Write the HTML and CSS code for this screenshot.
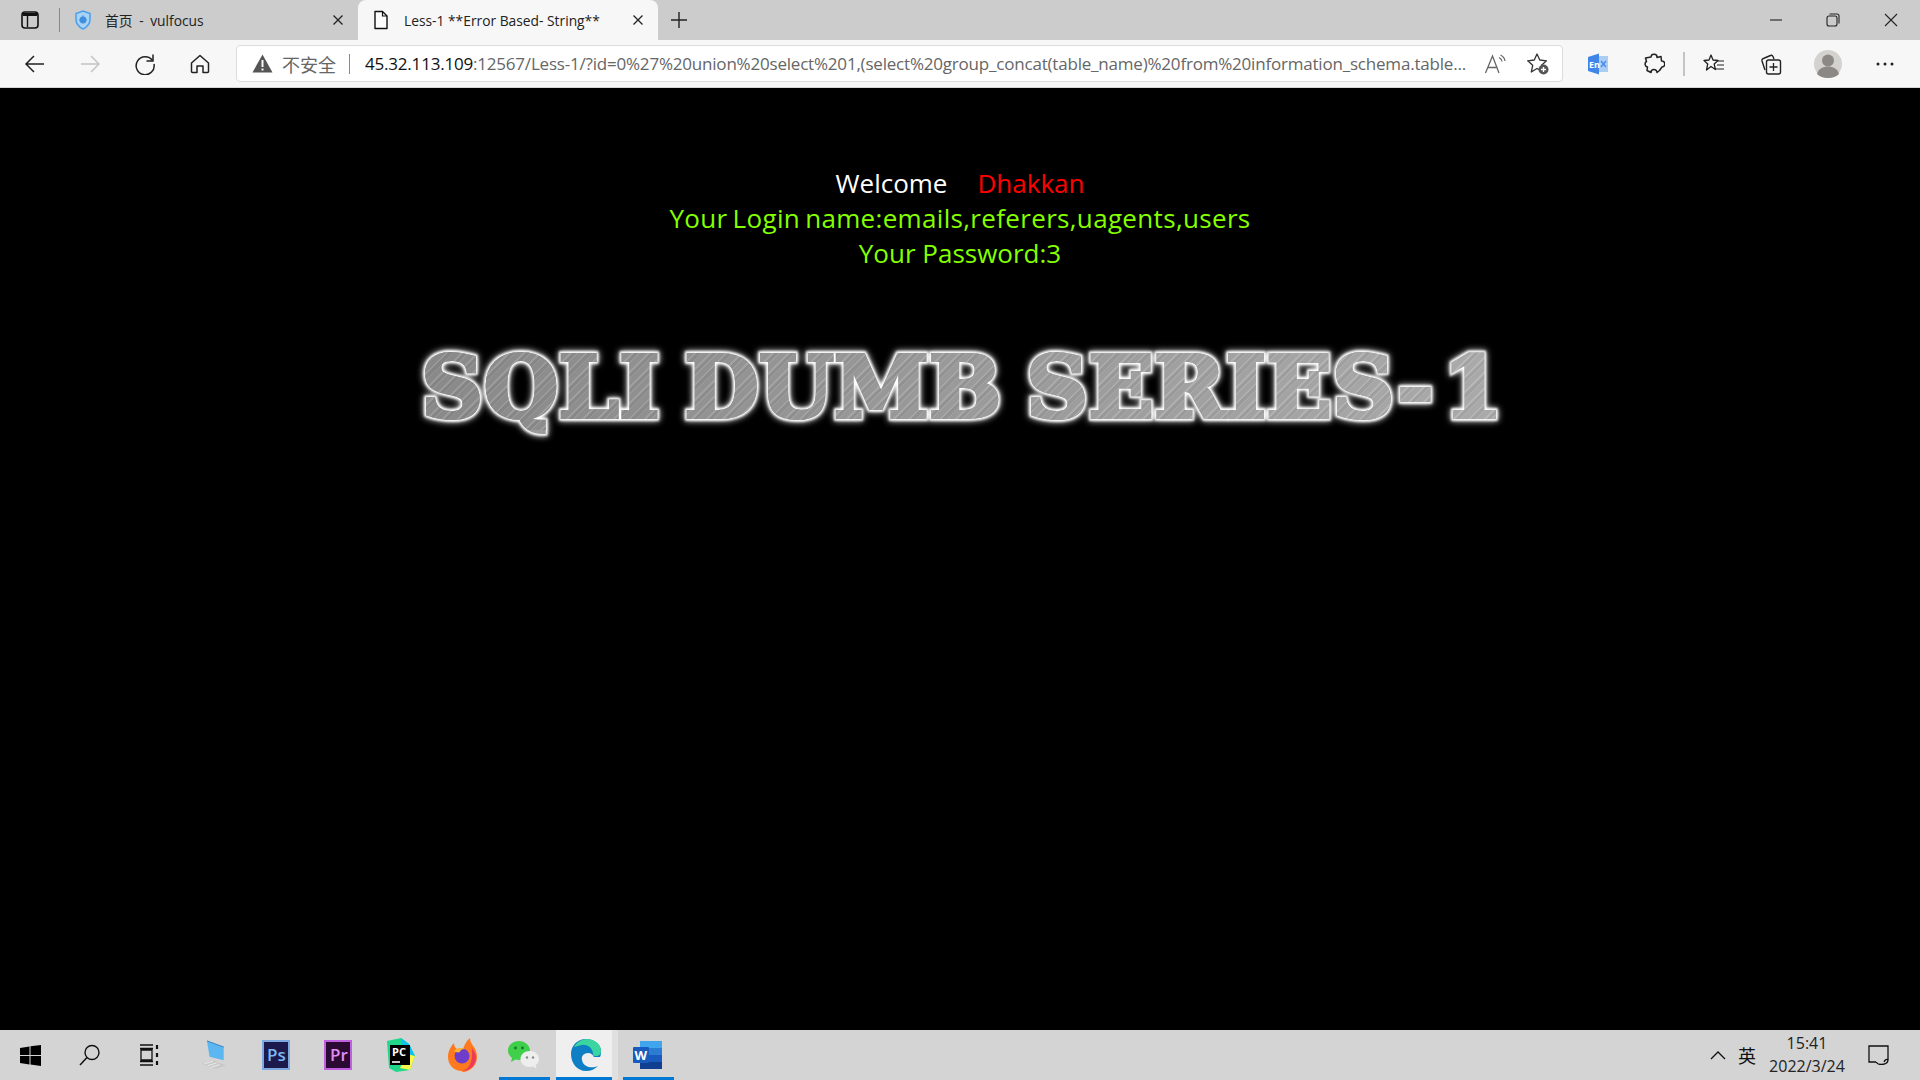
FILE: index.html
```html
<!DOCTYPE html>
<html lang="en">
<head>
  <meta charset="UTF-8" />
  <title>Less-1 **Error Based- String**</title>
  <link rel="stylesheet" href="styles.css">
</head>
<body>

  <header class="tabstrip">
    <div class="tab-actions">
      <svg width="20" height="20" viewBox="0 0 20 20"><rect x="2" y="2" width="16" height="16" rx="3" fill="none" stroke="#111" stroke-width="1.6"/><path d="M3 3h14v3H3z" fill="#111"/><path d="M7.5 6v11" stroke="#111" stroke-width="1.4"/></svg>
    </div>
    <div class="tab first">
      <svg class="tab-icon" width="18" height="20" viewBox="0 0 18 20"><path d="M9 1l7 2.500v6c0 4.500-3 7.500-7 9.500-4-2-7-5-7-9.500v-6z" fill="#a9d2f7" stroke="#4aa0ec" stroke-width="1.500"/><circle cx="9" cy="10" r="3.400" fill="#3f8fdc"/><path d="M9 5.500v2M5 10h8" stroke="#3f8fdc" stroke-width="1.200"/></svg>
      <span class="tab-title">首页 - vulfocus</span>
      <svg class="tab-close" width="12" height="12" viewBox="0 0 12 12"><path d="M1.500 1.500l9 9M10.500 1.500l-9 9" stroke="#222" stroke-width="1.300"/></svg>
    </div>
    <div class="tab active">
      <svg class="tab-icon" width="18" height="20" viewBox="0 0 18 20"><path d="M3 1.500h7.500L15 6v12.500H3z" fill="#fff" stroke="#111" stroke-width="1.400" stroke-linejoin="round"/><path d="M10.500 1.500V6H15" fill="none" stroke="#111" stroke-width="1.200"/></svg>
      <span class="tab-title">Less-1 **Error Based- String**</span>
      <svg class="tab-close" width="12" height="12" viewBox="0 0 12 12"><path d="M1.500 1.500l9 9M10.500 1.500l-9 9" stroke="#222" stroke-width="1.300"/></svg>
    </div>
    <div class="tab-new">
      <svg width="18" height="18" viewBox="0 0 18 18"><path d="M9 1v16M1 9h16" stroke="#222" stroke-width="1.400"/></svg>
    </div>
    <div class="window-controls">
      <span class="win-btn min"><svg width="14" height="14" viewBox="0 0 14 14"><path d="M1 7h12" stroke="#222" stroke-width="1.100"/></svg></span>
      <span class="win-btn"><svg width="14" height="14" viewBox="0 0 14 14"><rect x="1" y="3" width="10" height="10" rx="2" fill="none" stroke="#222" stroke-width="1.100"/><path d="M3.500 1H11a2 2 0 0 1 2 2v7.500" fill="none" stroke="#222" stroke-width="1.100"/></svg></span>
      <span class="win-btn"><svg width="14" height="14" viewBox="0 0 14 14"><path d="M1 1l12 12M13 1L1 13" stroke="#222" stroke-width="1.100"/></svg></span>
    </div>
  </header>

  <nav class="toolbar">
    <span class="nav-btn"><svg width="22" height="22" viewBox="0 0 22 22"><path d="M20 11H2M10 3l-8 8 8 8" fill="none" stroke="#222" stroke-width="1.500"/></svg></span>
    <span class="nav-btn"><svg width="22" height="22" viewBox="0 0 22 22"><path d="M2 11h18M12 3l8 8-8 8" fill="none" stroke="#c4c4c4" stroke-width="1.500"/></svg></span>
    <span class="nav-btn"><svg width="22" height="22" viewBox="0 0 22 22"><path d="M18.500 7.500A9 9 0 1 0 20 11" fill="none" stroke="#222" stroke-width="1.500"/><path d="M19 1.500v6.500h-6.500" fill="none" stroke="#222" stroke-width="1.500"/></svg></span>
    <span class="nav-btn"><svg width="22" height="22" viewBox="0 0 22 22"><path d="M2.500 10L11 2.500 19.500 10v8.500a1 1 0 0 1-1 1H14V13H8v6.500H3.500a1 1 0 0 1-1-1z" fill="none" stroke="#222" stroke-width="1.500" stroke-linejoin="round"/></svg></span>

    <div class="address">
      <svg class="warn" width="21" height="19" viewBox="0 0 21 19"><path d="M10.500 .5L20.500 18.500H.5z" fill="#555"/><path d="M10.500 6v7M10.500 14.500v2" stroke="#f7f7f7" stroke-width="2"/></svg>
      <span class="insecure">不安全</span>
      <span class="addr-sep"></span>
      <span class="url"><b>45.32.113.109</b>:12567/Less-1/?id=0%27%20union%20select%201,(select%20group_concat(table_name)%20from%20information_schema.table...</span>
      <svg class="addr-icon" width="24" height="22" viewBox="0 0 24 22"><path d="M1.500 20L8.500 3l6.500 17M4 14.500h9" fill="none" stroke="#666" stroke-width="1.300"/><path d="M15 4.500a5 5 0 0 1 3 4M16.500 2a8 8 0 0 1 4.500 6" fill="none" stroke="#666" stroke-width="1.200"/></svg>
      <svg class="addr-icon" width="24" height="24" viewBox="0 0 24 24"><path d="M11 2l2.800 6 6.700.8-5 4.500 1.300 6.500L11 16.500 5.300 20l1.400-6.700-5-4.500 6.600-.8z" fill="none" stroke="#333" stroke-width="1.300" stroke-linejoin="round"/><circle cx="17.500" cy="17.500" r="5" fill="#555"/><path d="M17.500 15v5M15 17.500h5" stroke="#fff" stroke-width="1.300"/></svg>
    </div>

    <span class="tool"><svg width="22" height="22" viewBox="0 0 22 22"><path d="M1 4l11-3.500V21.500L1 18z" fill="#3f86e8"/><path d="M12 3h9v16h-9z" fill="#a9cdf5"/><text x="2" y="15" class="en-mark">En</text><path d="M14 8l5 6M19 8l-5 6" stroke="#3f86e8" stroke-width="1.200"/></svg></span>
    <span class="tool"><svg width="22" height="22" viewBox="0 0 22 22"><path d="M8 4a3 3 0 0 1 6 .5l4-1 .5 4.500a3 3 0 0 1 .5 6l-2.500 3.500-2.500 2a3 3 0 0 0-6 0l-4-2 .5-3.500a3 3 0 0 1-1-5.500L2.500 5z" fill="none" stroke="#222" stroke-width="1.500" stroke-linejoin="round"/></svg></span>
    <span class="tool-sep"></span>
    <span class="tool wide"><svg width="22" height="22" viewBox="0 0 22 22"><path d="M8 2l2 5 5 .5-3.800 3.500 1.200 5.500L8 13.500 3.500 17 4.700 11 1 7.500 6 7z" fill="none" stroke="#222" stroke-width="1.300" stroke-linejoin="round"/><path d="M14 8h7M14 12h7M13 16h8" stroke="#222" stroke-width="1.200"/></svg></span>
    <span class="tool wide"><svg width="22" height="22" viewBox="0 0 22 22"><path d="M5 17L2 8a2 2 0 0 1 1.400-2.500L10.500 2.500A2 2 0 0 1 13 3.500L14 6" fill="none" stroke="#222" stroke-width="1.400"/><rect x="6.500" y="7" width="14" height="14" rx="2" fill="#f7f7f7" stroke="#222" stroke-width="1.400"/><path d="M13.500 10v8M9.500 14h8" stroke="#222" stroke-width="1.300"/></svg></span>
    <span class="tool wide"><span class="avatar"><svg width="28" height="28" viewBox="0 0 28 28"><circle cx="14" cy="14" r="14" fill="#d4d2cf"/><circle cx="14" cy="10.500" r="6" fill="#8c8886"/><path d="M3 24c1.500-5.500 6-7.500 11-7.500S23.500 18.500 25 24c-2.500 2.600-6.500 4-11 4s-8.500-1.400-11-4z" fill="#8c8886"/></svg></span></span>
    <span class="tool wide"><svg width="22" height="6" viewBox="0 0 22 6"><circle cx="4" cy="3" r="1.500" fill="#222"/><circle cx="11" cy="3" r="1.500" fill="#222"/><circle cx="18" cy="3" r="1.500" fill="#222"/></svg></span>
  </nav>

  <main class="page">
    <div class="result">
      <div class="welcome">Welcome&nbsp;&nbsp;&nbsp;&nbsp;<span class="name">Dhakkan</span></div>
      <div class="green login">Your Login name:emails,referers,uagents,users</div>
      <div class="green">Your Password:3</div>
    </div>
    <div class="banner"><span class="banner-text" data-text="SQLI DUMB SERIES-&#8202;1">SQLI DUMB SERIES-&#8202;1</span></div>
  </main>

  <footer class="taskbar">
    <span class="sys-btn"><svg width="21" height="21" viewBox="0 0 21 21"><path d="M0 3l9.500-1.500V10H0zM10.500 1.300L21 0v10H10.500zM0 11h9.500v8.500L0 18zM10.500 11H21v10l-10.500-1.500z" fill="#000"/></svg></span>
    <span class="sys-btn"><svg width="22" height="22" viewBox="0 0 22 22"><circle cx="13" cy="8.500" r="7" fill="none" stroke="#111" stroke-width="1.400"/><path d="M8 13.500L1 21" stroke="#111" stroke-width="1.500"/></svg></span>
    <span class="sys-btn"><svg width="22" height="22" viewBox="0 0 22 22"><path d="M1 1h13M1 21h13M1 4.500h13M1 17.500h13M2 6v10h11V6z" fill="none" stroke="#111" stroke-width="1.300"/><path d="M18 1v4M18 9v4M18 17v4" stroke="#111" stroke-width="2.200"/></svg></span>

    <div class="apps">
      <span class="app"><svg width="30" height="30" viewBox="0 0 30 34"><path d="M7 1l19 7v15L10 19z" fill="#5cb6ef"/><path d="M7 1l19 7" stroke="#2a7bbf"/><path d="M1 27l13-4 15 6-12 4z" fill="#c9c9c9"/><path d="M4 27l10-3M8 29l10-3M11 31l10-3" stroke="#eee"/></svg></span>
      <span class="app"><svg width="28" height="30" viewBox="0 0 28 30"><rect x="1" y="1" width="26" height="28" fill="#1c1a4d" stroke="#7da9e0" stroke-width="2"/><text x="5" y="21" class="app-mark ps">Ps</text></svg></span>
      <span class="app"><svg width="28" height="30" viewBox="0 0 28 30"><rect x="1" y="1" width="26" height="28" fill="#2a0a33" stroke="#c05fe0" stroke-width="2"/><text x="6" y="21" class="app-mark pr">Pr</text></svg></span>
      <span class="app"><svg width="32" height="34" viewBox="0 0 32 34"><path d="M3 3l14-3 8 6 6 12-5 14-14 2-7-4z" fill="#21d789"/><path d="M17 0l8 6 6 12-9 4z" fill="#07c3f2"/><path d="M16 30l10 2 5-14-8-2z" fill="#fcf84a"/><rect x="6" y="7" width="20" height="20" fill="#000"/><text x="8" y="18" class="app-mark pc">PC</text><path d="M8 24h8" stroke="#fff" stroke-width="1.600"/></svg></span>
      <span class="app"><svg width="30" height="34" viewBox="0 0 30 34"><path d="M15 33C6 33 1 26 1 19 1 13 4 8 7 5c0 3 1 5 3 6 2-1 5-1 6 0 1-3 3-8 7-11 0 4 2 6 4 9 2 3 3 6 3 10 0 8-6 15-15 15z" fill="#ff7a1f"/><path d="M25 10c3 4 4 7 4 10 0 7-6 13-14 13 7-2 11-8 10-23z" fill="#ee3a5a"/><circle cx="15" cy="18" r="7.500" fill="#6e3dc9"/><path d="M7 13c3-3 8-4 11-2-3 0-5 1-5 3-3 1-4 0-6-1z" fill="#ffb52e"/></svg></span>
      <span class="app open"><svg width="32" height="30" viewBox="0 0 32 30"><path d="M11 1C5 1 0 5 0 10.500c0 3 1.500 5.500 4 7.500l-1 4 4.500-2.500c1 .3 2.300.5 3.500.5 6 0 11-4.500 11-9.500S17 1 11 1z" fill="#3fcf4a"/><circle cx="7.500" cy="8" r="1.400" fill="#137a25"/><circle cx="14.500" cy="8" r="1.400" fill="#137a25"/><path d="M22 11c-5.500 0-9.500 3.500-9.500 8s4 8 9.500 8c1 0 2-.2 3-.5l3.500 2-.8-3.500c2-1.500 3.300-3.500 3.300-6 0-4.500-4-8-9-8z" fill="#eeeeee"/><circle cx="19" cy="17.500" r="1.200" fill="#888"/><circle cx="25" cy="17.500" r="1.200" fill="#888"/></svg></span>
      <span class="app open active"><svg width="30" height="32" viewBox="0 0 30 32"><path d="M15 0C6 0 0 7 0 15c0 9 6 17 15 17 5 0 9-2 12-5-6 3-15 1-16-6-1-4 2-7 6-7 3 0 5 2 6 4h6c1-2 1-4 1-6C30 5 23 0 15 0z" fill="#0e7fc4"/><path d="M3 8c3-5 8-8 13-8 8 0 14 6 14 12 0 3-2 5-5 5s-3-1-3-2c0-6-6-10-11-9-4 .5-7 2-8 2z" fill="#3bd6a0"/></svg></span>
      <span class="app open"><svg width="30" height="30" viewBox="0 0 30 30"><rect x="7" y="1" width="22" height="28" rx="1" fill="#2b7cd3"/><rect x="7" y="1" width="22" height="7" fill="#41a5ee"/><rect x="7" y="15" width="22" height="7" fill="#185abd"/><rect x="7" y="22" width="22" height="7" fill="#103f91"/><rect x="0" y="7" width="16" height="16" rx="1" fill="#185abd"/><text x="1.500" y="20" class="app-mark word">W</text></svg></span>
    </div>

    <div class="tray">
      <svg class="tray-chevron" width="16" height="10" viewBox="0 0 16 10"><path d="M1 9l7-7 7 7" fill="none" stroke="#111" stroke-width="1.300"/></svg>
      <span class="ime">英</span>
      <div class="clock"><span>15:41</span><span>2022/3/24</span></div>
      <svg class="notify" width="22" height="20" viewBox="0 0 22 20"><path d="M8 17H1V1h19v13.500" fill="none" stroke="#111" stroke-width="1.300"/><path d="M8 17c1 1.500 3 2.500 5 2.500 4.500 0 7-2 7-5-1-.5-3 0-4 2.500" fill="none" stroke="#111" stroke-width="1.300"/></svg>
    </div>
  </footer>

</body>
</html>
```

FILE: styles.css
```css
* {
  box-sizing: border-box;
}

html, body {
  height: 100%;
}

body {
  margin: 0;
  height: 1080px;
  overflow: hidden;
  display: flex;
  flex-direction: column;
  background: #000;
  font-family: "Open Sans", "Noto Sans CJK SC", sans-serif;
}

/* tab strip */
.tabstrip {
  height: 40px;
  flex: none;
  display: flex;
  background: #cccccc;
  color: #222;
  font-size: 13.8px;
}

.tab-actions {
  width: 60px;
  display: flex;
  align-items: center;
  padding-left: 20px;
  position: relative;
}

.tab-actions::after {
  content: "";
  position: absolute;
  right: 0;
  top: 8px;
  height: 24px;
  width: 1px;
  background: #8a8a8a;
}

.tab {
  width: 298px;
  display: flex;
  align-items: center;
  padding: 0 14px;
}

.tab.first .tab-title {
  word-spacing: 3px;
}

.tab.active {
  width: 300px;
  background: #f7f7f7;
  border-radius: 8px 8px 0 0;
  padding-left: 14px;
}

.tab-icon {
  flex: none;
  margin-right: 13px;
}

.tab.active .tab-icon {
  margin-right: 14px;
}

.tab-title {
  flex: 1;
  white-space: nowrap;
}

.tab-close {
  flex: none;
}

.tab-new {
  width: 42px;
  display: flex;
  align-items: center;
  justify-content: center;
}

.window-controls {
  margin-left: auto;
  display: flex;
}

.win-btn {
  width: 58px;
  display: flex;
  align-items: center;
  justify-content: center;
}

.win-btn.min {
  width: 56px;
}

/* address bar row */
.toolbar {
  height: 48px;
  flex: none;
  display: flex;
  align-items: center;
  background: #f7f7f7;
  padding: 0 7px;
  border-bottom: 1px solid #d6d6d6;
}

.nav-btn {
  width: 55px;
  flex: none;
  display: flex;
  align-items: center;
  justify-content: center;
}

.address {
  flex: 1;
  min-width: 0;
  height: 37px;
  margin: 0 7px 0 9px;
  display: flex;
  align-items: center;
  background: #fff;
  border: 1px solid #dcdcdc;
  border-radius: 4px;
  padding: 0 12px 0 15px;
  font-size: 17px;
  color: #666;
}

.warn {
  flex: none;
}

.insecure {
  margin-left: 9px;
  color: #666;
  font-size: 18px;
}

.addr-sep {
  width: 1px;
  height: 20px;
  margin: 0 15px 0 13px;
  background: #888;
}

.url {
  flex: 1;
  min-width: 0;
  white-space: nowrap;
  overflow: hidden;
  letter-spacing: -.2px;
}

.url b {
  font-weight: 400;
  color: #111;
}

.addr-icon {
  flex: none;
  margin-left: 18px;
}

.tool {
  width: 56px;
  flex: none;
  display: flex;
  align-items: center;
  justify-content: center;
}

.tool.wide {
  width: 57px;
}

.tool-sep {
  width: 2px;
  height: 24px;
  margin-left: 1px;
  background: #c4c4c4;
}

.avatar {
  display: flex;
}

.en-mark {
  font: 700 9px "Open Sans", sans-serif;
  fill: #fff;
}

/* page content */
.page {
  flex: 1;
  min-height: 0;
  background: #000;
  padding-top: 78px;
  text-align: center;
  font-size: 26px;
  line-height: 35px;
}

.welcome {
  color: #fff;
}

.name {
  color: #ff0000;
  margin-left: 3px;
}

.green {
  color: #84ff00;
}

.login {
  letter-spacing: .33px;
  word-spacing: -2px;
}

.banner {
  margin-top: 74px;
  padding-left: 5px;
  line-height: 1;
}

.banner-text {
  display: inline-block;
  position: relative;
  z-index: 0;
  font-family: "DejaVu Serif", serif;
  font-weight: 700;
  font-size: 85px;
  letter-spacing: .9px;
  word-spacing: -6px;
  white-space: nowrap;
  color: #9b9b9b;
  -webkit-text-stroke: 4px #9b9b9b;
}

/* white rim and glow sit behind the letters */
.banner-text::before {
  content: attr(data-text);
  position: absolute;
  left: 0;
  top: 0;
  z-index: -1;
  color: #ffffff;
  -webkit-text-stroke: 7.5px #ffffff;
  filter: blur(.8px) drop-shadow(0 0 3px #ffffff);
}

/* brushed metal hatching on top */
.banner-text::after {
  content: attr(data-text);
  position: absolute;
  left: 0;
  top: 0;
  color: transparent;
  -webkit-text-stroke: 4px transparent;
  background:
    repeating-linear-gradient(135deg, rgba(255,255,255,.1) 0 2px, rgba(0,0,0,.07) 2px 5px, rgba(255,255,255,.05) 5px 6px, rgba(0,0,0,.03) 6px 11px),
    linear-gradient(90deg, #8e8e8e, #b0b0b0);
  -webkit-background-clip: text;
  background-clip: text;
}

/* windows taskbar */
.taskbar {
  height: 50px;
  flex: none;
  display: flex;
  background: #d4d4d4;
  color: #222;
}

.sys-btn {
  width: 60px;
  flex: none;
  display: flex;
  align-items: center;
  justify-content: center;
}

.apps {
  display: flex;
  margin-left: 4px;
}

.app {
  width: 62px;
  flex: none;
  display: flex;
  align-items: center;
  justify-content: center;
  position: relative;
  padding-right: 2px;
}

.app.open::after {
  content: "";
  position: absolute;
  left: 5px;
  bottom: 0;
  width: 51px;
  height: 3px;
  background: #0078d4;
}

.app.active {
  background: linear-gradient(90deg, #efefef 0 56px, #e0e0e0 56px);
}

.app.active::after {
  left: 0;
  width: 56px;
}

.app-mark {
  font-family: "Open Sans", sans-serif;
  font-weight: 600;
}

.ps {
  font-size: 17px;
  fill: #7fb7f0;
}

.pr {
  font-size: 17px;
  fill: #e08cf5;
}

.pc {
  font-size: 11px;
  font-weight: 700;
  fill: #fff;
}

.word {
  font-size: 13px;
  font-weight: 700;
  fill: #fff;
}

.tray {
  margin-left: auto;
  display: flex;
  align-items: center;
  padding-right: 30px;
}

.tray-chevron {
  margin-right: 12px;
}

.ime {
  font-size: 18px;
  color: #111;
}

.clock {
  width: 102px;
  display: flex;
  flex-direction: column;
  align-items: center;
  font-size: 16px;
  line-height: 23px;
  margin-right: 10px;
}
```
